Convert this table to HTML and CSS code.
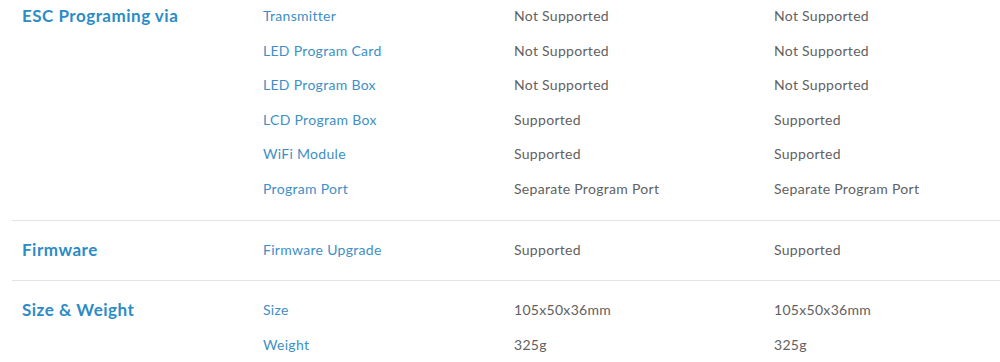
FILE: index.html
```html
<!DOCTYPE html>
<html lang="en">
<head>
    <meta charset="UTF-8">
    <title>ESC Specifications</title>
    <link rel="stylesheet" href="styles.css">
</head>
<body>
    <div class="spec-table">
        <div class="spec-group">
            <div class="group-title">ESC Programing via</div>
            <div class="group-rows">
                <div class="spec-row"><span class="label">Transmitter</span><span class="value">Not Supported</span><span class="value">Not Supported</span></div>
                <div class="spec-row"><span class="label">LED Program Card</span><span class="value">Not Supported</span><span class="value">Not Supported</span></div>
                <div class="spec-row"><span class="label">LED Program Box</span><span class="value">Not Supported</span><span class="value">Not Supported</span></div>
                <div class="spec-row"><span class="label">LCD Program Box</span><span class="value">Supported</span><span class="value">Supported</span></div>
                <div class="spec-row"><span class="label">WiFi Module</span><span class="value">Supported</span><span class="value">Supported</span></div>
                <div class="spec-row"><span class="label">Program Port</span><span class="value">Separate Program Port</span><span class="value">Separate Program Port</span></div>
            </div>
        </div>
        <div class="spec-group">
            <div class="group-title">Firmware</div>
            <div class="group-rows">
                <div class="spec-row"><span class="label">Firmware Upgrade</span><span class="value">Supported</span><span class="value">Supported</span></div>
            </div>
        </div>
        <div class="spec-group">
            <div class="group-title">Size &amp; Weight</div>
            <div class="group-rows">
                <div class="spec-row"><span class="label">Size</span><span class="value">105x50x36mm</span><span class="value">105x50x36mm</span></div>
                <div class="spec-row"><span class="label">Weight</span><span class="value">325g</span><span class="value">325g</span></div>
            </div>
        </div>
    </div>
</body>
</html>
```

FILE: styles.css
```css
body {
    margin: 0;
    background: #fff;
    font-family: Lato, "Open Sans", sans-serif;
    font-size: 14px;
    letter-spacing: 0.3px;
}
.spec-table {
    margin-left: 12px;
    margin-top: -1px;
}
.spec-group {
    display: grid;
    grid-template-columns: 251px 1fr;
    padding: 12px 0 13px;
    border-top: 1px solid #e3e3e3;
}
.spec-group:first-child {
    padding-top: 0;
    border-top: none;
}
.group-title {
    padding-left: 10px;
    height: 34.6px;
    line-height: 34.6px;
    font-size: 17px;
    font-weight: bold;
    letter-spacing: 0.5px;
    color: #2b8cc6;
}
.spec-row {
    display: grid;
    grid-template-columns: 251px 260px 1fr;
    height: 34.6px;
    line-height: 34.6px;
}
.label {
    color: #3e8fc7;
}
.value {
    color: #616161;
}
```
